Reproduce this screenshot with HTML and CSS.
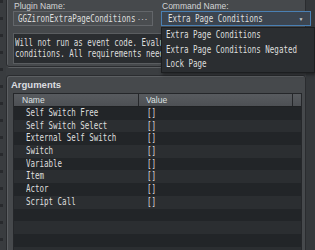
FILE: index.html
```html
<!DOCTYPE html>
<html>
  <head>
    <title>Plugin Command</title>
    <link rel="stylesheet" href="styles.css">
  </head>
  <body>
    <div id="window">
      <div class="edge-left"></div>
      <div id="main">
        <!-- Plugin and command selection -->
        <div class="group" id="command-group">
          <div class="fields">
            <div class="field">
              <label>Plugin Name:</label>
              <div class="input">
                <span class="mono">GGZironExtraPageConditions</span>
                <span class="more">&middot;&middot;&middot;</span>
              </div>
            </div>
            <div class="field command-field">
              <label>Command Name:</label>
              <div class="input select">
                <span class="mono">Extra Page Conditions</span>
                <span class="arrow">&#9660;</span>
              </div>
              <ul class="dropdown">
                <li><span class="mono">Extra Page Conditions</span></li>
                <li><span class="mono">Extra Page Conditions Negated</span></li>
                <li><span class="mono">Lock Page</span></li>
              </ul>
            </div>
          </div>
          <div class="description">
            <div class="mono-block">
              Will not run as event code. Evaluated together with page
              conditions. All requirements need to be met.
            </div>
          </div>
        </div>
        <!-- Arguments table -->
        <div class="group" id="arguments-group">
          <div class="group-title">Arguments</div>
          <div class="table">
            <div class="header">
              <div class="cell">Name</div>
              <div class="cell">Value</div>
              <div class="cell"></div>
            </div>
            <div class="rows">
              <div class="row"><div class="name"><span class="mono">Self Switch Free</span></div><div class="value"><span class="mono">[]</span></div></div>
              <div class="row"><div class="name"><span class="mono">Self Switch Select</span></div><div class="value"><span class="mono">[]</span></div></div>
              <div class="row"><div class="name"><span class="mono">External Self Switch</span></div><div class="value"><span class="mono">[]</span></div></div>
              <div class="row"><div class="name"><span class="mono">Switch</span></div><div class="value"><span class="mono">[]</span></div></div>
              <div class="row"><div class="name"><span class="mono">Variable</span></div><div class="value"><span class="mono">[]</span></div></div>
              <div class="row"><div class="name"><span class="mono">Item</span></div><div class="value"><span class="mono">[]</span></div></div>
              <div class="row"><div class="name"><span class="mono">Actor</span></div><div class="value"><span class="mono">[]</span></div></div>
              <div class="row"><div class="name"><span class="mono">Script Call</span></div><div class="value"><span class="mono">[]</span></div></div>
              <div class="row"></div>
              <div class="row"></div>
              <div class="row"></div>
              <div class="row"></div>
            </div>
          </div>
        </div>
      </div>
      <div class="edge-right"></div>
    </div>
  </body>
</html>
```

FILE: styles.css
```css
/* CSS for the window frame */
body {
  margin: 0;
  padding: 0;
  overflow: hidden;
  background-color: #3b3e41;
  font-family: "Liberation Sans", Arial, sans-serif;
  font-size: 8.5px;
  color: #d2d4d6;
}
#window {
  display: flex;
  height: 250px;
}
.edge-left {
  width: 6px;
  background-color: #393c3f;
  background-image: repeating-linear-gradient(
    to bottom,
    #282a2d 0 3px,
    transparent 3px 17px
  );
  background-size: 3px 100%;
  background-repeat: no-repeat;
}
.edge-right {
  flex: 1;
  background-color: #35383b;
}
#main {
  width: 300px;
  display: flex;
  flex-direction: column;
  gap: 8px;
}
/* condensed monospace text, like the editor's font */
.mono,
.mono-block {
  font-family: "DejaVu Sans Mono", monospace;
  font-size: 10px;
  color: #dedede;
  transform: scaleX(0.75);
  transform-origin: left center;
  white-space: nowrap;
}
.mono {
  display: inline-block;
}
.mono-block {
  width: 133.33%;
  white-space: normal;
  transform-origin: left top;
}
.group {
  border: 1px solid #2a2c2f;
  border-radius: 3px;
  background-color: #46494c;
  box-shadow: inset 1px 1px 0 #5c5f62, 1px 1px 0 #5c5f62;
}
/* CSS for the command selection */
#command-group {
  margin-top: -3px;
  padding: 3px 3px 2px 6px;
}
.fields {
  display: grid;
  grid-template-columns: 140px 1fr;
  gap: 8px;
}
.field {
  position: relative;
}
.field label {
  display: block;
  height: 10px;
  line-height: 10px;
  padding-left: 1px;
}
.input {
  box-sizing: border-box;
  height: 15px;
  display: flex;
  align-items: center;
  gap: 4px;
  padding: 0 4px;
  border: 1px solid #63666a;
  background-color: #4a4d50;
}
.input .mono {
  flex: 1 1 0;
  min-width: 0;
}
.more {
  font-size: 9px;
  letter-spacing: 0.5px;
  color: #d0d0d0;
}
.select {
  padding: 0 7px 0 6px;
  border-color: #4a80b4;
  background-color: #3c4550;
}
.arrow {
  font-size: 5px;
  color: #c8ccd0;
}
.dropdown {
  position: absolute;
  top: 26px;
  left: 0;
  z-index: 2;
  width: 152px;
  margin: 0;
  padding: 0;
  list-style: none;
  border: 1px solid #1c1e20;
  background-color: #2b2e31;
  box-shadow: 1px 2px 3px rgba(0, 0, 0, 0.4);
}
.dropdown li {
  height: 14.5px;
  line-height: 14.5px;
  padding-left: 4px;
  overflow: hidden;
}
.description {
  box-sizing: border-box;
  height: 31px;
  margin-top: 7px;
  padding: 3px 1px 0;
  line-height: 11px;
  border: 1px solid #5a5d60;
  background-color: #2a2d30;
  overflow: hidden;
}
/* CSS for the arguments table */
#arguments-group {
  flex: 1;
  padding: 0 3px 0 6px;
}
.group-title {
  height: 17px;
  line-height: 17px;
  margin-left: -2px;
  font-size: 9.5px;
  font-weight: bold;
  color: #dcdee0;
}
.table {
  border-left: 1px solid #25272a;
  border-right: 1px solid #25272a;
}
.header {
  box-sizing: border-box;
  height: 14px;
  display: grid;
  grid-template-columns: 125px 154px 1fr;
  border-top: 1px solid #25272a;
  border-bottom: 1px solid #1f2123;
  background: linear-gradient(#585b5f, #4d5054);
  color: #dde0e2;
}
.header .cell {
  box-sizing: border-box;
  line-height: 12px;
  padding-left: 7px;
  border-right: 1px solid #25272a;
}
.header .cell:first-child {
  padding-left: 8px;
}
.header .cell:last-child {
  border-right: none;
}
.row {
  display: grid;
  grid-template-columns: 125px 1fr;
  height: 12.7px;
  line-height: 12.7px;
  background-color: #222528;
}
.row:nth-child(even) {
  background-color: #2b2e31;
}
.row .name {
  padding-left: 12px;
}
.row .value {
  padding-left: 8px;
}
```
